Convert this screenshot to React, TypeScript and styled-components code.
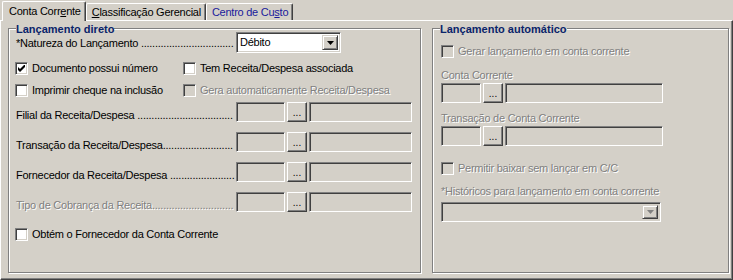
import React from 'react';
import styled, { createGlobalStyle } from 'styled-components';

const face = '#D4D0C8';
const light = '#FFFFFF';
const shadow = '#808080';
const dark = '#404040';
const spacing = -0.25;

const GlobalStyle = createGlobalStyle`
  body {
    margin: 0;
    background: ${face};
    font-family: 'Liberation Sans', Arial, sans-serif;
    font-size: 11px;
    letter-spacing: ${spacing}px;
    color: #000;
  }
`;

const Window = styled.div`
  width: 733px;
  height: 280px;
  background: ${face};
  display: flex;
  flex-direction: column;
`;

const TabStrip = styled.div`
  height: 20px;
  display: flex;
  align-items: flex-end;
  padding-left: 2px;
  box-sizing: border-box;
  position: relative;
  z-index: 1;
`;

const Tab = styled.div<{ $active?: boolean; $color?: string }>`
  height: ${({ $active }) => ($active ? '20px' : '17px')};
  margin-bottom: ${({ $active }) => ($active ? '-1px' : '0')};
  box-sizing: border-box;
  padding: ${({ $active }) => ($active ? '3px 4px 0 6px' : '2px 4px 0 5px')};
  line-height: 13px;
  white-space: nowrap;
  background: ${face};
  color: ${({ $color }) => $color || '#000'};
  border-top: 1px solid ${light};
  border-left: 1px solid ${light};
  border-right: 1px solid ${dark};
  border-radius: 2px 2px 0 0;
  box-shadow: inset -1px 0 0 ${shadow};
`;

const Panel = styled.div`
  flex: 1;
  box-sizing: border-box;
  border-top: 1px solid ${light};
  border-left: 1px solid ${light};
  border-right: 1px solid ${dark};
  border-bottom: 1px solid ${dark};
  box-shadow: inset -1px -1px 0 ${shadow};
  display: flex;
  gap: 11px;
  padding: 7px 0 0 7px;
`;

const Group = styled.div<{ $w: number; $pl: number }>`
  position: relative;
  width: ${({ $w }) => $w}px;
  height: 245px;
  box-sizing: border-box;
  border: 1px solid ${shadow};
  box-shadow: inset 1px 1px 0 ${light}, 1px 1px 0 ${light};
  padding-left: ${({ $pl }) => $pl}px;
  display: flex;
  flex-direction: column;
`;

const GroupTitle = styled.div`
  position: absolute;
  top: -6px;
  left: 7px;
  background: ${face};
  font-weight: bold;
  letter-spacing: 0;
  color: #0a246a;
  line-height: 13px;
  white-space: nowrap;
`;

const Row = styled.div<{ $mt: number; $h: number }>`
  margin-top: ${({ $mt }) => $mt}px;
  height: ${({ $h }) => $h}px;
  display: flex;
  align-items: flex-end;
`;

const CheckGrid = styled.div<{ $mt: number }>`
  margin-top: ${({ $mt }) => $mt}px;
  height: 13px;
  display: grid;
  grid-template-columns: 168px auto;
`;

const Text = styled.span<{ $disabled?: boolean }>`
  line-height: 13px;
  white-space: nowrap;
  color: ${({ $disabled }) => ($disabled ? shadow : '#000')};
  text-shadow: ${({ $disabled }) => ($disabled ? `1px 1px 0 ${light}` : 'none')};
`;

const DotLabel = styled(Text)<{ $pb?: number }>`
  width: 221px;
  flex: none;
  padding-left: 1px;
  box-sizing: border-box;
  overflow: hidden;
  padding-bottom: ${({ $pb }) => $pb || 0}px;
`;

const CheckItem = styled.label`
  display: flex;
  align-items: center;
  gap: 4px;
  height: 13px;
`;

const Box = styled.span<{ $disabled?: boolean }>`
  width: 13px;
  height: 13px;
  box-sizing: border-box;
  border: 1px solid;
  border-color: ${shadow} ${light} ${light} ${shadow};
  box-shadow: inset 1px 1px 0 ${dark}, inset -1px -1px 0 ${face};
  background: ${({ $disabled }) => ($disabled ? face : light)};
  display: flex;
  align-items: center;
  justify-content: center;
  flex: none;
`;

const Edit = styled.div<{ $w: number }>`
  width: ${({ $w }) => $w}px;
  height: 20px;
  box-sizing: border-box;
  border: 1px solid;
  border-color: ${shadow} ${light} ${light} ${shadow};
  box-shadow: inset 1px 1px 0 ${dark}, inset -1px -1px 0 ${face};
  background: ${face};
  flex: none;
`;

const Lookup = styled.div`
  display: flex;
  gap: 2px;
`;

const DotsButton = styled.div`
  width: 20px;
  height: 20px;
  box-sizing: border-box;
  border: 1px solid;
  border-color: ${light} ${dark} ${dark} ${light};
  box-shadow: inset -1px -1px 0 ${shadow};
  background: ${face};
  display: flex;
  align-items: flex-end;
  justify-content: center;
  font-size: 10px;
  letter-spacing: 0;
  line-height: 12px;
  padding-bottom: 2px;
  flex: none;
`;

const Combo = styled.div<{ $w: number; $h: number; $bg: string }>`
  width: ${({ $w }) => $w}px;
  height: ${({ $h }) => $h}px;
  box-sizing: border-box;
  border: 1px solid;
  border-color: ${shadow} ${light} ${light} ${shadow};
  box-shadow: inset 1px 1px 0 ${dark}, inset -1px -1px 0 ${face};
  background: ${({ $bg }) => $bg};
  padding: 2px 2px 2px 3px;
  display: flex;
  align-items: center;
  justify-content: space-between;
  flex: none;
`;

const ComboText = styled.span`
  line-height: 13px;
`;

const DropButton = styled.div`
  width: 16px;
  height: 100%;
  box-sizing: border-box;
  border: 1px solid;
  border-color: ${face} ${dark} ${dark} ${face};
  box-shadow: inset 1px 1px 0 ${light}, inset -1px -1px 0 ${shadow};
  background: ${face};
  display: flex;
  align-items: center;
  justify-content: center;
`;

const Arrow = ({ color }: { color: string }) => (
  <svg width="7" height="4" viewBox="0 0 7 4">
    <path d="M0 0h7L3.5 4z" fill={color} />
  </svg>
);

const Check = () => (
  <svg width="7" height="7" viewBox="0 0 7 7">
    <path d="M0 2l2 2 5-5v3L2 7 0 5z" fill="#000" />
  </svg>
);

// leader dots: as many as fit between the caption and the field
let ctx: CanvasRenderingContext2D | null = null;
const textWidth = (s: string) => {
  if (!ctx) ctx = document.createElement('canvas').getContext('2d');
  if (!ctx) return s.length * 5.3;
  ctx.font = "11px 'Liberation Sans', Arial, sans-serif";
  return ctx.measureText(s).width + s.length * spacing;
};
const leader = (caption: string, width: number) => {
  const free = width - textWidth(caption);
  return '.'.repeat(Math.max(0, Math.floor(free / textWidth('.'))));
};

const CheckBox: React.FC<{ label: string; checked?: boolean; disabled?: boolean }> = ({
  label,
  checked,
  disabled,
}) => (
  <CheckItem>
    <Box $disabled={disabled}>{checked && <Check />}</Box>
    <Text $disabled={disabled}>{label}</Text>
  </CheckItem>
);

const LookupField: React.FC<{ widths: [number, number] }> = ({ widths }) => (
  <Lookup>
    <Edit $w={widths[0]} />
    <DotsButton>...</DotsButton>
    <Edit $w={widths[1]} />
  </Lookup>
);

const FieldRow: React.FC<{ label: string; mt: number; disabled?: boolean }> = ({
  label,
  mt,
  disabled,
}) => (
  <Row $mt={mt} $h={20}>
    <DotLabel $disabled={disabled}>
      {label}
      {leader(label, 219)}
    </DotLabel>
    <LookupField widths={[49, 103]} />
  </Row>
);

export default function App() {
  const natureza = '*Natureza do Lançamento ';
  return (
    <>
      <GlobalStyle />
      <Window>
        <TabStrip>
          <Tab $active>
            Conta Corr<u>e</u>nte
          </Tab>
          <Tab>
            <u>C</u>lassificação Gerencial
          </Tab>
          <Tab $color="#1a1a9c">
            Centro de Cu<u>s</u>to
          </Tab>
        </TabStrip>
        <Panel>
          <Group $w={413} $pl={6}>
            <GroupTitle>Lançamento direto</GroupTitle>
            <Row $mt={3} $h={21}>
              <DotLabel $pb={3}>
                {natureza}
                {leader(natureza, 219)}
              </DotLabel>
              <Combo $w={105} $h={21} $bg={light}>
                <ComboText>Débito</ComboText>
                <DropButton>
                  <Arrow color="#000" />
                </DropButton>
              </Combo>
            </Row>
            <CheckGrid $mt={9}>
              <CheckBox label="Documento possui número" checked />
              <CheckBox label="Tem Receita/Despesa associada" />
            </CheckGrid>
            <CheckGrid $mt={9}>
              <CheckBox label="Imprimir cheque na inclusão" />
              <CheckBox label="Gera automaticamente Receita/Despesa" disabled />
            </CheckGrid>
            <FieldRow mt={5} label="Filial da Receita/Despesa " />
            <FieldRow mt={10} label="Transação da Receita/Despesa" />
            <FieldRow mt={10} label="Fornecedor da Receita/Despesa " />
            <FieldRow mt={10} label="Tipo de Cobrança da Receita" disabled />
            <CheckGrid $mt={16}>
              <CheckBox label="Obtém o Fornecedor da Conta Corrente" />
            </CheckGrid>
          </Group>
          <Group $w={297} $pl={8}>
            <GroupTitle>Lançamento automático</GroupTitle>
            <CheckGrid $mt={16}>
              <CheckBox label="Gerar lançamento em conta corrente" disabled />
            </CheckGrid>
            <Row $mt={11} $h={13}>
              <Text $disabled>Conta Corrente</Text>
            </Row>
            <Row $mt={1} $h={20}>
              <LookupField widths={[40, 158]} />
            </Row>
            <Row $mt={9} $h={13}>
              <Text $disabled>Transação de Conta Corrente</Text>
            </Row>
            <Row $mt={1} $h={20}>
              <LookupField widths={[40, 158]} />
            </Row>
            <CheckGrid $mt={16}>
              <CheckBox label="Permitir baixar sem lançar em C/C" disabled />
            </CheckGrid>
            <Row $mt={10} $h={13}>
              <Text $disabled>*Históricos para lançamento em conta corrente</Text>
            </Row>
            <Row $mt={4} $h={20}>
              <Combo $w={220} $h={20} $bg={face}>
                <span />
                <DropButton>
                  <Arrow color={shadow} />
                </DropButton>
              </Combo>
            </Row>
          </Group>
        </Panel>
      </Window>
    </>
  );
}
